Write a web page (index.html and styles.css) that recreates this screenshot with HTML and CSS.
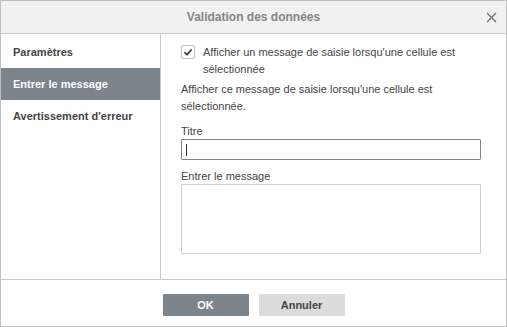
FILE: index.html
```html
<!DOCTYPE html>
<html lang="fr">
<head>
<meta charset="utf-8">
<title>Validation des données</title>
<link rel="stylesheet" href="styles.css">
</head>
<body>
<div class="dialog">
  <div class="header">
    <span></span>
    <span class="title">Validation des données</span>
    <span class="close">
      <svg width="11" height="11" viewBox="0 0 11 11"><path d="M1 1L10 10M10 1L1 10" stroke="#6f6f6f" stroke-width="1.3" fill="none"/></svg>
    </span>
  </div>
  <div class="body">
    <div class="nav">
      <div class="nav-item">Paramètres</div>
      <div class="nav-item active">Entrer le message</div>
      <div class="nav-item">Avertissement d'erreur</div>
    </div>
    <div class="content">
      <div class="check-row">
        <span class="checkbox">
          <svg width="12" height="12" viewBox="0 0 12 12"><path d="M2.5 6.2L5 8.6L9.6 3.4" stroke="#444" stroke-width="1.8" fill="none"/></svg>
        </span>
        <span class="check-label">Afficher un message de saisie lorsqu'une cellule est sélectionnée</span>
      </div>
      <p class="desc">Afficher ce message de saisie lorsqu'une cellule est sélectionnée.</p>
      <div class="label">Titre</div>
      <div class="input"><span class="caret"></span></div>
      <div class="label">Entrer le message</div>
      <div class="textarea"></div>
    </div>
  </div>
  <div class="footer">
    <button class="btn primary">OK</button>
    <button class="btn">Annuler</button>
  </div>
</div>
</body>
</html>
```
FILE: styles.css
```css
* { box-sizing: border-box; }
html, body { margin: 0; padding: 0; background: #fff; }
body {
  font-family: "Liberation Sans", Arial, sans-serif;
  font-size: 11px;
  color: #444;
}
.dialog {
  width: 507px;
  height: 327px;
  border: 1px solid #c0c0c0;
  display: flex;
  flex-direction: column;
}
.header {
  height: 33px;
  flex: none;
  background: #f1f1f1;
  border-bottom: 1px solid #cbcbcb;
  display: grid;
  grid-template-columns: 1fr auto 1fr;
  align-items: center;
}
.title {
  font-size: 12px;
  font-weight: bold;
  color: #858585;
}
.close {
  justify-self: end;
  margin-right: 9px;
  display: flex;
  margin-top: 1px;
}
.body {
  flex: 1;
  display: flex;
  min-height: 0;
}
.nav {
  width: 160px;
  flex: none;
  border-right: 1px solid #cbcbcb;
  padding-top: 2px;
}
.nav-item {
  height: 32px;
  line-height: 32px;
  padding-left: 12px;
  font-weight: bold;
  color: #444;
}
.nav-item.active {
  background: #7d858c;
  color: #fff;
}
.content {
  flex: 1;
  padding: 10px 0 0 20px;
}
.check-row {
  display: flex;
  align-items: flex-start;
  width: 300px;
}
.checkbox {
  width: 14px;
  height: 14px;
  border: 1px solid #c0c0c0;
  border-radius: 2px;
  margin-top: 1px;
  flex: none;
  display: flex;
  align-items: center;
  justify-content: center;
}
.check-label {
  margin-left: 8px;
  line-height: 17px;
}
.desc {
  margin: 3px 0 0;
  width: 290px;
  line-height: 17px;
}
.label {
  margin-top: 8px;
  line-height: 16px;
}
.input {
  width: 300px;
  height: 21px;
  border: 1px solid #848484;
  border-radius: 1px;
  display: flex;
  align-items: center;
  padding-left: 4px;
}
.caret {
  width: 1px;
  height: 12px;
  background: #333;
}
.textarea {
  width: 300px;
  height: 70px;
  border: 1px solid #cfcfcf;
  border-radius: 1px;
}
.footer {
  height: 47px;
  flex: none;
  border-top: 1px solid #cbcbcb;
  display: flex;
  justify-content: center;
  align-items: flex-start;
  gap: 10px;
  padding-top: 14px;
}
.btn {
  width: 86px;
  height: 22px;
  border: none;
  border-radius: 1px;
  background: #dcdcdc;
  color: #444;
  font-family: "Liberation Sans", Arial, sans-serif;
  font-size: 11px;
  font-weight: bold;
  padding: 0;
}
.btn.primary {
  background: #7d858c;
  color: #fff;
}
```
